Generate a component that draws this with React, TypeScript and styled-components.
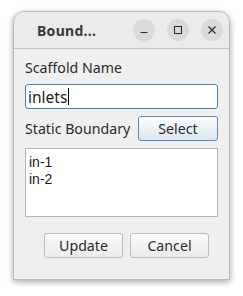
import { createGlobalStyle } from 'styled-components';
import styled from 'styled-components';

const GlobalStyle = createGlobalStyle`
  html, body {
    margin: 0;
    padding: 0;
    background: #ffffff;
  }
  body {
    font-family: 'Noto Sans', 'DejaVu Sans', sans-serif;
  }
`;

const Page = styled.div`
  padding: 11px 0 0 13px;
  height: 296px;
  box-sizing: border-box;
`;

const Window = styled.div`
  width: 217px;
  height: 269px;
  box-sizing: border-box;
  display: flex;
  flex-direction: column;
  background: #efefef;
  border: 1px solid #b9b9b9;
  border-radius: 11px 11px 0 0;
  box-shadow: 0 2px 6px rgba(0, 0, 0, 0.35);
  overflow: hidden;
`;

const TitleBar = styled.div`
  height: 37px;
  flex: none;
  box-sizing: border-box;
  display: flex;
  align-items: center;
  padding: 0 6px 0 23px;
  background: #ebebeb;
  border-bottom: 1px solid #c4c4c4;
`;

const Title = styled.div`
  flex: 1;
  font-family: 'Noto Sans', sans-serif;
  font-weight: 700;
  font-size: 14px;
  color: #3a3a3a;
  letter-spacing: 0.3px;
`;

const Controls = styled.div`
  display: flex;
  gap: 12px;
`;

const CircleButton = styled.div`
  width: 22px;
  height: 22px;
  border-radius: 50%;
  background: #dadada;
  display: flex;
  align-items: center;
  justify-content: center;
  color: #2e2e2e;
`;

const Body = styled.div`
  flex: 1;
  display: flex;
  flex-direction: column;
  gap: 7px;
  padding: 9px 11px 0 11px;
`;

const Label = styled.div`
  font-size: 14.2px;
  line-height: 19px;
  color: #2b2b2b;
`;

const Input = styled.div`
  height: 25px;
  box-sizing: border-box;
  border: 1px solid #4d80b3;
  border-radius: 3px;
  background: #ffffff;
  display: flex;
  align-items: center;
  padding-left: 2px;
  font-size: 15.5px;
  color: #1e1e1e;
`;

const Caret = styled.span`
  display: inline-block;
  width: 1px;
  height: 17px;
  background: #000;
  margin-left: 1px;
`;

const Row = styled.div`
  display: flex;
  align-items: center;
  justify-content: space-between;
`;

const Button = styled.div<{ $primary?: boolean }>`
  width: ${({ $primary }) => ($primary ? '80px' : '79px')};
  height: 25px;
  box-sizing: border-box;
  display: flex;
  align-items: center;
  justify-content: center;
  font-size: 14.2px;
  color: #2b2b2b;
  border-radius: 3px;
  border: 1px solid ${({ $primary }) => ($primary ? '#5f88b3' : '#bdbdbd')};
  background: ${({ $primary }) =>
    $primary
      ? 'linear-gradient(#fbfcfd, #dfe6ee)'
      : 'linear-gradient(#fafafa, #ebebeb)'};
`;

const List = styled.div`
  height: 69px;
  box-sizing: border-box;
  background: #ffffff;
  border: 1px solid #b7b7b7;
  padding: 5px 0 0 3px;
  font-family: 'Liberation Sans', Arial, sans-serif;
  font-size: 14px;
  line-height: 17px;
  color: #1a1a1a;
`;

const Footer = styled.div`
  display: flex;
  justify-content: flex-end;
  gap: 7px;
  margin-top: 9px;
  padding-right: 9px;
`;

export default function App() {
  return (
    <>
      <GlobalStyle />
      <Page>
        <Window>
          <TitleBar>
            <Title>Bound...</Title>
            <Controls>
              <CircleButton>
                <svg width="10" height="10" viewBox="0 0 10 10">
                  <path d="M1.5 7.5h7" stroke="currentColor" strokeWidth="1.2" />
                </svg>
              </CircleButton>
              <CircleButton>
                <svg width="10" height="10" viewBox="0 0 10 10">
                  <rect x="1.5" y="1.5" width="7" height="7" fill="none" stroke="currentColor" strokeWidth="1.1" />
                </svg>
              </CircleButton>
              <CircleButton>
                <svg width="10" height="10" viewBox="0 0 10 10">
                  <path d="M1.5 1.5l7 7M8.5 1.5l-7 7" stroke="currentColor" strokeWidth="1.2" />
                </svg>
              </CircleButton>
            </Controls>
          </TitleBar>
          <Body>
            <Label>Scaffold Name</Label>
            <Input>
              inlets
              <Caret />
            </Input>
            <Row>
              <Label>Static Boundary</Label>
              <Button $primary>Select</Button>
            </Row>
            <List>
              <div>in-1</div>
              <div>in-2</div>
            </List>
            <Footer>
              <Button>Update</Button>
              <Button>Cancel</Button>
            </Footer>
          </Body>
        </Window>
      </Page>
    </>
  );
}
